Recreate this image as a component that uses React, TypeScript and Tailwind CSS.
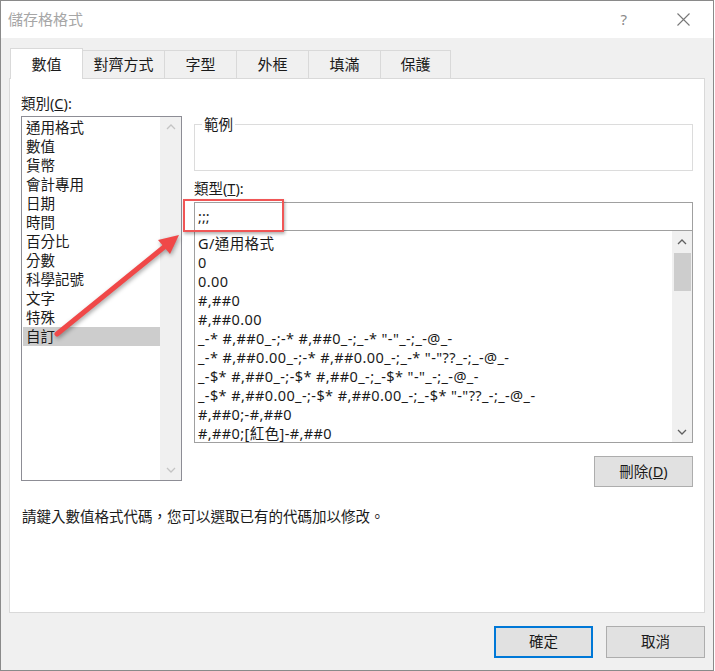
import React from 'react';

const FONT = "font-['Noto_Sans','Noto_Sans_CJK_TC',sans-serif]";

const CATEGORIES = ['通用格式', '數值', '貨幣', '會計專用', '日期', '時間', '百分比', '分數', '科學記號', '文字', '特殊', '自訂'];

const FORMATS = [
  'G/通用格式',
  '0',
  '0.00',
  '#,##0',
  '#,##0.00',
  '_-* #,##0_-;-* #,##0_-;_-* "-"_-;_-@_-',
  '_-* #,##0.00_-;-* #,##0.00_-;_-* "-"??_-;_-@_-',
  '_-$* #,##0_-;-$* #,##0_-;_-$* "-"_-;_-@_-',
  '_-$* #,##0.00_-;-$* #,##0.00_-;_-$* "-"??_-;_-@_-',
  '#,##0;-#,##0',
  '#,##0;[紅色]-#,##0',
];

const TABS = [
  { label: '數值', w: 'w-[73px]' },
  { label: '對齊方式', w: 'w-[82px]' },
  { label: '字型', w: 'w-[72px]' },
  { label: '外框', w: 'w-[72px]' },
  { label: '填滿', w: 'w-[72px]' },
  { label: '保護', w: 'w-[70px]' },
];

function Chevron({ up, color }: { up?: boolean; color: string }) {
  return (
    <svg width="10" height="6" viewBox="0 0 10 6" fill="none">
      <path d={up ? 'M1 5L5 1L9 5' : 'M1 1L5 5L9 1'} stroke={color} strokeWidth="1.3" />
    </svg>
  );
}

export default function App() {
  return (
    <div className={`relative w-[714px] h-[671px] overflow-hidden bg-[#f0f0f0] border border-[#8a8a8a] ${FONT} text-[14.5px] text-[#1a1a1a]`}>
      {/* title bar */}
      <div className="h-[37px] bg-white flex items-center pl-[7px] pr-[23px]">
        <span className="flex-1 text-[15px] text-[#a6a6a6]">儲存格格式</span>
        <span className="text-[15px] text-[#8a8a8a] mr-[50px]">?</span>
        <svg width="13" height="13" viewBox="0 0 13 13" fill="none">
          <path d="M0.5 0.5L12.5 12.5M12.5 0.5L0.5 12.5" stroke="#777" strokeWidth="1.1" />
        </svg>
      </div>

      {/* tabs */}
      <div className="flex items-end pl-[9px] h-[40px]">
        {TABS.map((t, i) =>
          i === 0 ? (
            <div key={t.label} className={`${t.w} h-[31px] bg-white border border-b-0 border-[#d9d9d9] flex items-center justify-center text-[15px] whitespace-nowrap -mb-px relative z-10`}>
              {t.label}
            </div>
          ) : (
            <div key={t.label} className={`${t.w} h-[28px] bg-[#f0f0f0] border border-l-0 border-b-0 border-[#d9d9d9] flex items-center justify-center text-[15px] whitespace-nowrap`}>
              {t.label}
            </div>
          )
        )}
      </div>

      {/* panel */}
      <div className="ml-[8px] w-[696px] h-[535px] bg-white border border-[#d9d9d9] flex flex-col pl-[11px] pr-[11px]">
        <div className="flex gap-[12px] pt-[14px]">
          {/* left column */}
          <div className="w-[161px] flex flex-col">
            <div className="h-[20px] leading-[20px]">
              類別(<span className="underline">C</span>):
            </div>
            <div className="mt-[3px] h-[365px] border border-[#8d8d95] flex">
              <div className="flex-1 pt-[1px] pl-[1px]">
                {CATEGORIES.map((c) => (
                  <div key={c} className={`h-[19px] leading-[19px] pl-[3px] ${c === '自訂' ? 'bg-[#cdcdcd]' : ''}`}>
                    {c}
                  </div>
                ))}
              </div>
              <div className="w-[21px] bg-[#f0f0f0] flex flex-col items-center justify-between py-[7px]">
                <Chevron up color="#c4c4c4" />
                <Chevron color="#c4c4c4" />
              </div>
            </div>
          </div>

          {/* right column */}
          <div className="flex-1 flex flex-col">
            <fieldset className="mt-[22px] h-[56px] border border-[#dcdcdc] pl-[7px] pr-0">
              <legend className="px-[2px] text-[14.5px] leading-[18px]">範例</legend>
            </fieldset>
            <div className="mt-[7px] h-[20px] leading-[20px]">
              類型(<span className="underline">T</span>):
            </div>
            <div className="mt-[4px] h-[29px] border border-[#a0a0a0] pl-[3px] flex items-center">;;;</div>
            <div className="h-[212px] border border-t-0 border-[#a0a0a0] flex">
              <div className="flex-1 pt-[3px] pl-[3px] tracking-[0.4px]">
                {FORMATS.map((f) => (
                  <div key={f} className="h-[19px] leading-[19px] whitespace-pre">
                    {f}
                  </div>
                ))}
              </div>
              <div className="w-[20px] bg-[#f0f0f0] flex flex-col items-center pt-[8px] pb-[7px]">
                <Chevron up color="#606060" />
                <div className="mt-[8px] w-[17px] h-[38px] bg-[#cdcdcd]" />
                <div className="flex-1" />
                <Chevron color="#606060" />
              </div>
            </div>
            <div className="mt-[13px] flex justify-end">
              <button className="w-[99px] h-[31px] bg-[#e1e1e1] border border-[#adadad] text-[14.5px]">
                刪除(<span className="underline">D</span>)
              </button>
            </div>
          </div>
        </div>
        <div className="mt-[19px] pl-[1px] text-[14.5px]">請鍵入數值格式代碼，您可以選取已有的代碼加以修改。</div>
      </div>

      {/* dialog buttons */}
      <div className="flex justify-end gap-[13px] pr-[8px] mt-[13px]">
        <button className="w-[99px] h-[32px] bg-[#e1e1e1] border-2 border-[#0078d7] text-[14.5px]">確定</button>
        <button className="w-[99px] h-[32px] bg-[#e1e1e1] border border-[#adadad] text-[14.5px]">取消</button>
      </div>

      {/* annotation overlay */}
      <div className="absolute left-[182px] top-[198px] w-[101px] h-[33px] border-2 border-[#f05656] shadow-[1px_2px_3px_rgba(0,0,0,0.3)] pointer-events-none" />
      <svg className="absolute -left-px -top-px pointer-events-none drop-shadow-[1px_2px_2px_rgba(0,0,0,0.35)]" width="715" height="671" viewBox="0 0 715 671">
        <line x1="57" y1="334" x2="166" y2="245.5" stroke="#f04848" strokeWidth="5" strokeLinecap="round" />
        <polygon points="179,235 170,254 158,240" fill="#f04848" />
      </svg>
    </div>
  );
}
